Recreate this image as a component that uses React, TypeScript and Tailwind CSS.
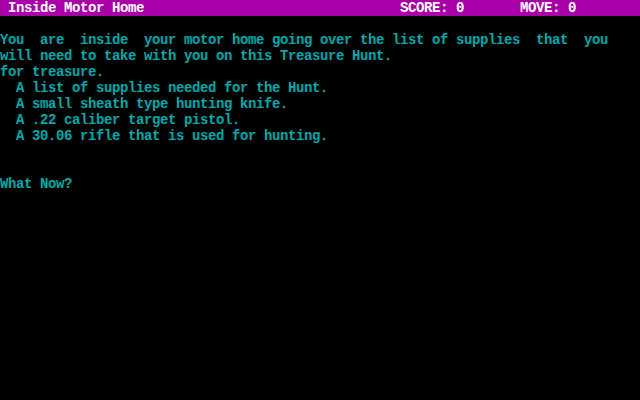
const lines: string[] = [
  "",
  "You  are  inside  your motor home going over the list of supplies  that  you",
  "will need to take with you on this Treasure Hunt.",
  "for treasure.",
  "  A list of supplies needed for the Hunt.",
  "  A small sheath type hunting knife.",
  "  A .22 caliber target pistol.",
  "  A 30.06 rifle that is used for hunting.",
  "",
  "",
  "What Now?",
];

export default function App() {
  return (
    <div className="w-[640px] h-[400px] bg-black overflow-hidden font-['Liberation_Mono',monospace] font-bold text-[14px] tracking-[-0.4px] leading-[16px] whitespace-pre">
      {/* status bar */}
      <div className="h-4 bg-[#aa00aa] text-white flex">
        <span className="w-[400px]">{" Inside Motor Home"}</span>
        <span className="w-[120px]">SCORE: 0</span>
        <span>MOVE: 0</span>
      </div>
      <div className="text-[#00aaaa]">
        {lines.map((line, i) => (
          <div key={i} className="h-4">
            {line}
          </div>
        ))}
      </div>
    </div>
  );
}
